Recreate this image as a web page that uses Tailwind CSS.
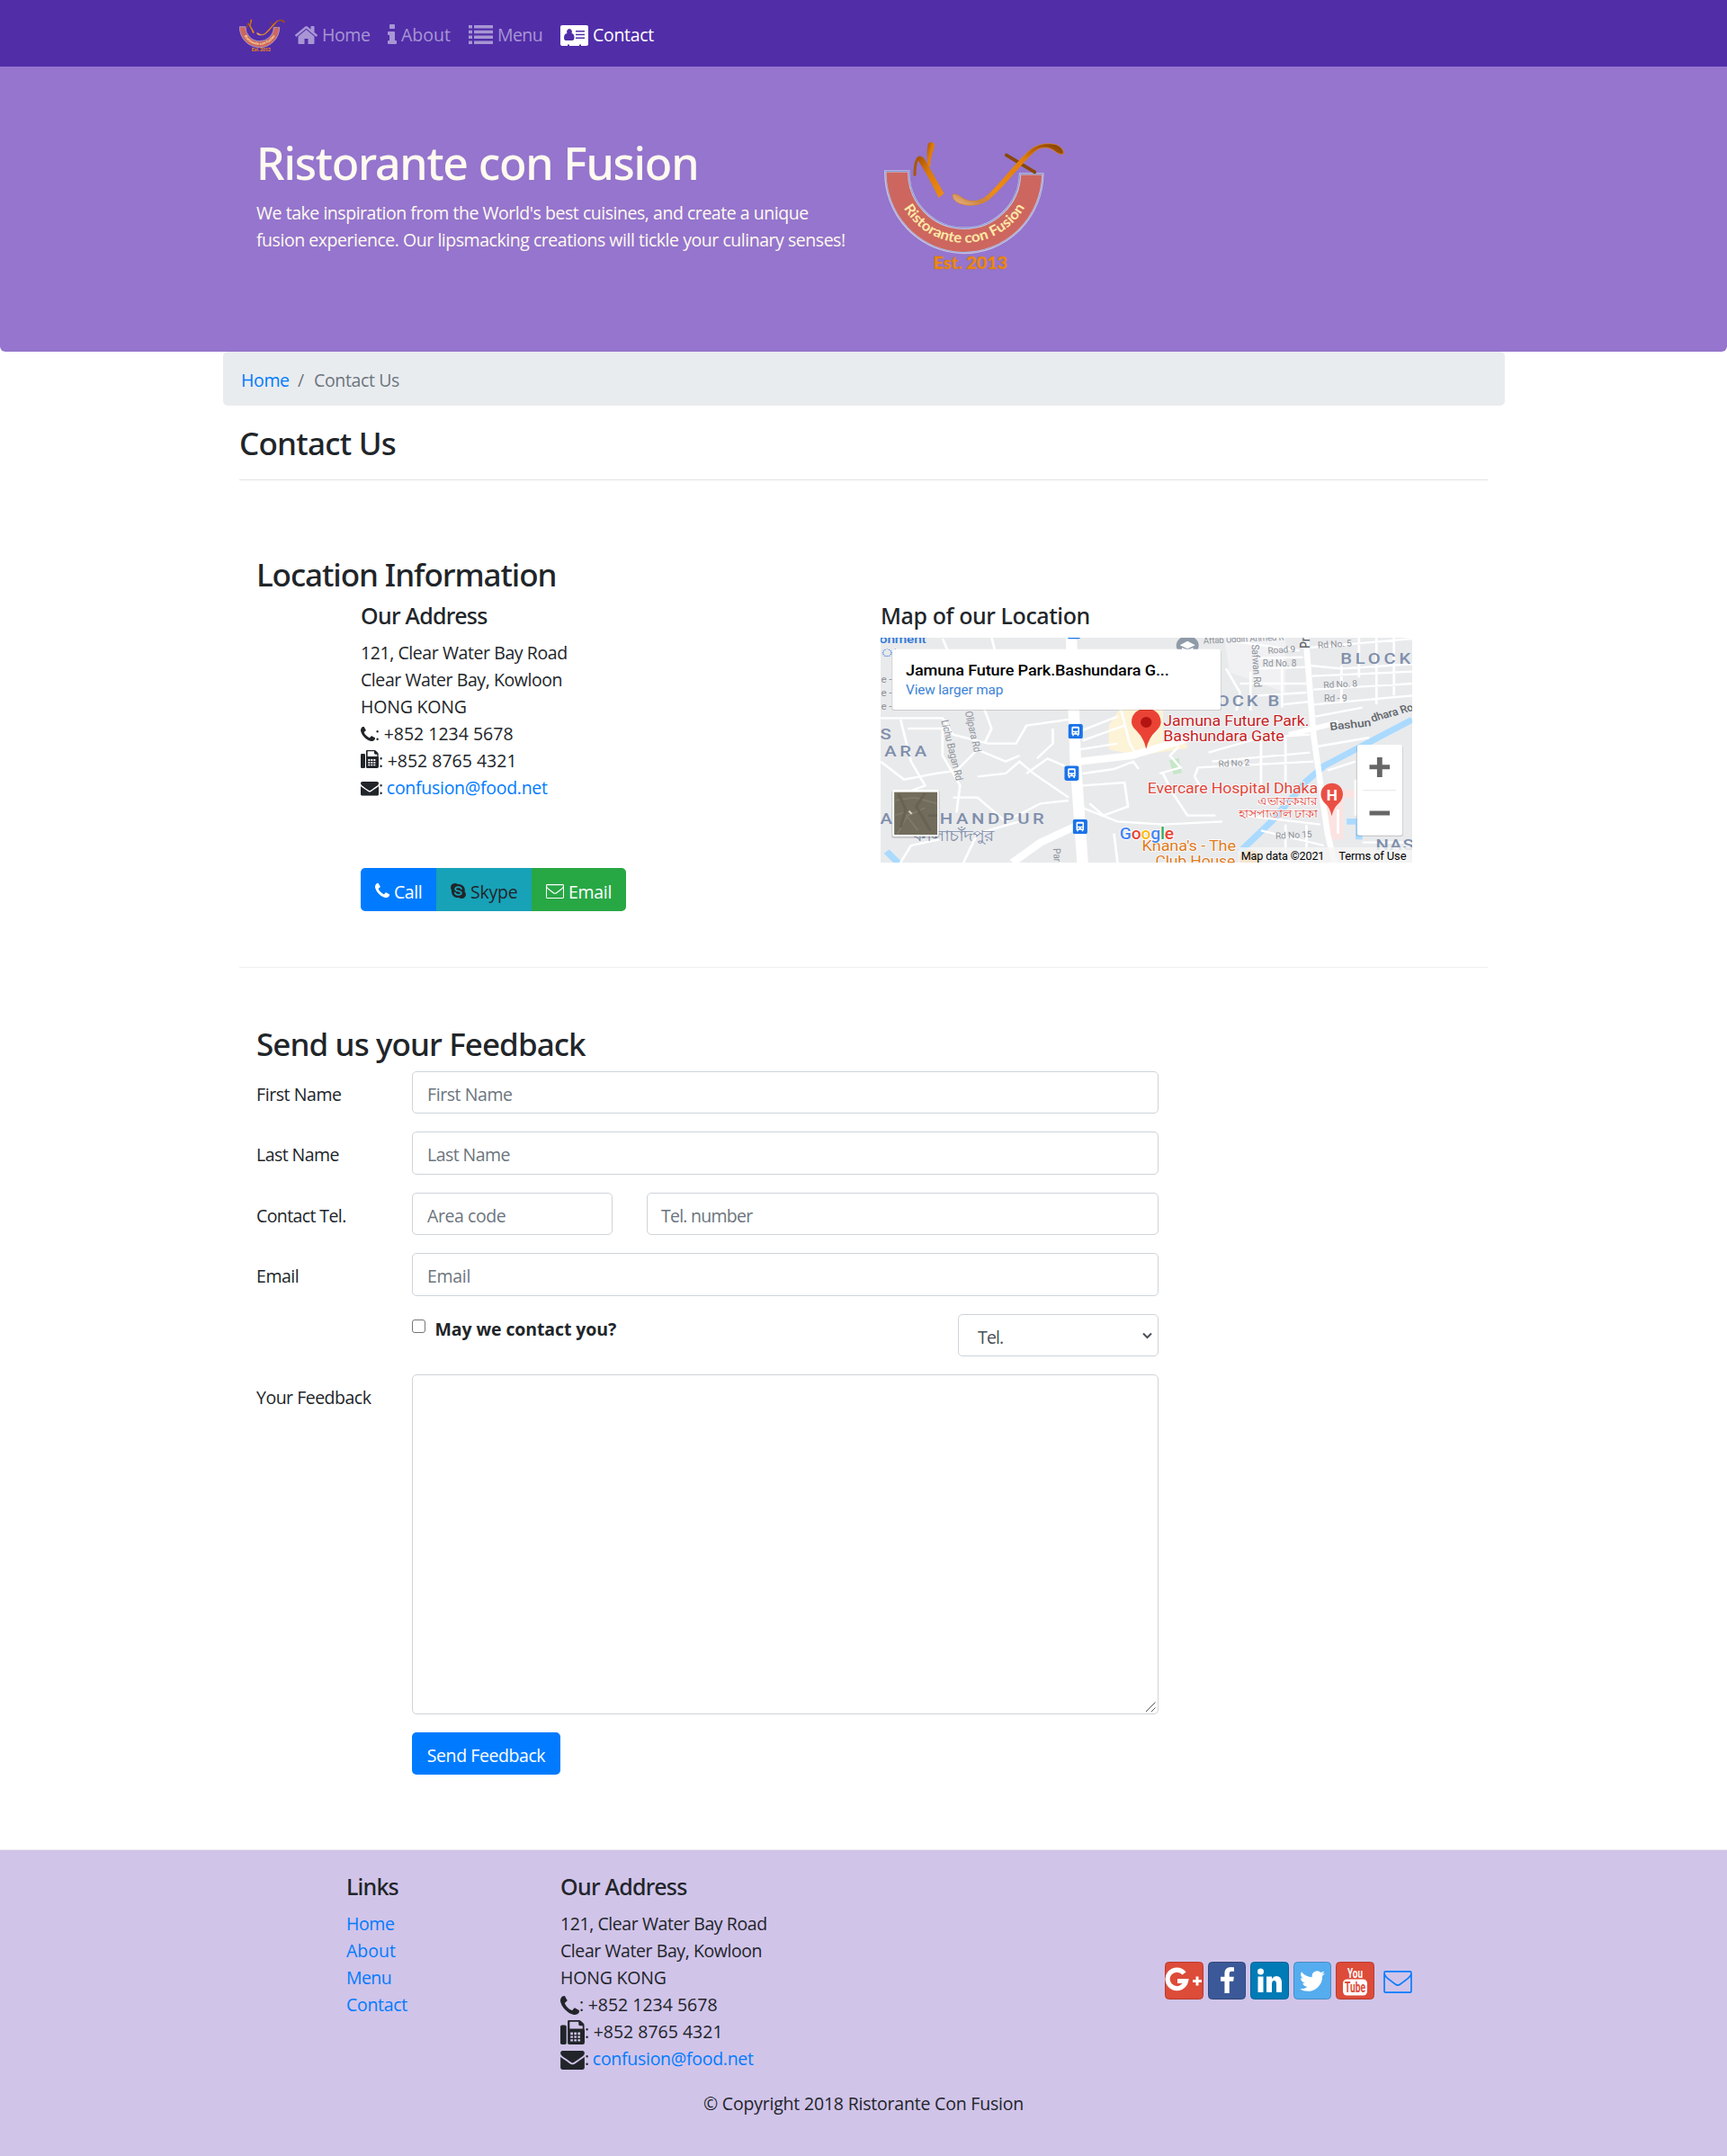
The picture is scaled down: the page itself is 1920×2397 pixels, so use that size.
<!DOCTYPE html>
<html lang="en">
<head>
<meta charset="utf-8">
<title>Ristorante Con Fusion: Contact Us</title>
<script src="https://cdn.jsdelivr.net/npm/@tailwindcss/browser@4"></script>
</head>
<body class="bg-white text-[#212529] font-['Open_Sans',sans-serif] text-[19.5px] leading-[30px] tracking-[-0.42px]">

<!-- shared symbols -->
<svg class="absolute size-0">
  <linearGradient id="gold" x1="0" y1="0" x2="1" y2="1"><stop offset="0" stop-color="#a34f00"/><stop offset=".4" stop-color="#d9780c"/><stop offset="1" stop-color="#f08c14"/></linearGradient>
  <linearGradient id="blade" x1="0" y1="1" x2="1" y2="0"><stop offset="0" stop-color="#ecbd8c"/><stop offset=".15" stop-color="#c98443"/><stop offset=".3" stop-color="#f08c14"/><stop offset=".7" stop-color="#e07d0c"/><stop offset="1" stop-color="#7a3b02"/></linearGradient>
  <symbol id="logo" viewBox="66 48 604 438">
    <path d="M70 151H148A186 186 0 0 0 520 160H596A262 267 0 0 1 70 151Z" fill="#cd665f" stroke="#cfc5e2" stroke-width="7"/>
    <path d="M70 151H148A186 186 0 0 0 520 160H596" fill="none" stroke="#7c9ad6" stroke-width="3"/>
    <path d="M71 152A261 265 0 0 0 596 160" fill="none" stroke="#7c9ad6" stroke-width="2"/>
    <path id="ribbon" d="M100 157A233 233 0 0 0 566 157" fill="none"/>
    <text font-family="Lato, sans-serif" font-weight="700" font-size="47" letter-spacing="0" fill="#ffe9a6"><textPath href="#ribbon" startOffset="122" textLength="490" lengthAdjust="spacingAndGlyphs">Ristorante con Fusion</textPath></text>
    <text x="230" y="477" font-family="Lato, sans-serif" font-weight="900" font-size="56" fill="#ee8a10" stroke="#c9700f" stroke-width="1" textLength="248" lengthAdjust="spacingAndGlyphs">Est. 2013</text>
    <path d="M168 166C168 130 174 105 186 104" fill="none" stroke="#a85808" stroke-width="9"/>
    <path d="M172 116Q186 88 202 112L266 225L248 240Q215 170 180 116Z" fill="url(#gold)"/>
    <path d="M212 134C208 104 208 80 213 58Q224 48 234 60C234 84 222 92 220 134Z" fill="url(#gold)"/>
    <path d="M474 97L569 154" stroke="#8a4708" stroke-width="11" stroke-linecap="round"/>
    <path d="M294 230Q302 224 318 234Q350 262 395 244C440 215 520 100 565 72Q600 52 640 62Q664 72 666 92Q655 98 642 88Q612 62 578 78C540 104 470 200 415 246Q380 270 335 263Q296 256 294 230Z" fill="url(#blade)" stroke="#e8850f" stroke-width="2"/>
  </symbol>
  <symbol id="phone" viewBox="192 128 1408 1408"><path fill="currentColor" d="M1600 1240q0 27-10 70.500t-21 68.500q-21 50-122 106-94 51-186 51-27 0-53-3.500t-57.500-12.500-47-14.500-55.500-20.500-49-18q-98-35-175-83-127-79-264-216t-216-264q-48-77-83-175-3-9-18-49t-20.500-55.500-14.500-47-12.500-57.500-3.500-53q0-92 51-186 56-101 106-122 25-11 68.500-21t70.500-10q14 0 21 3 18 6 53 76 11 19 30 54t35 63.500 31 53.500q3 4 17.500 25t21.500 35.500 7 28.500q0 20-28.500 50t-62 55-62 53-28.500 46q0 9 5 22.500t8.500 20.500 14 24 11.500 19q76 137 174 235t235 174q2 1 19 11.500t24 14 20.500 8.500 22.500 5q18 0 46-28.500t53-62 55-62 50-28.500q14 0 28.500 7t35.500 21.500 25 17.500q25 15 53.500 31t63.500 35 54 30q70 35 76 53 3 7 3 21z"/></symbol>
  <symbol id="fax" viewBox="0 0 60 60"><rect x="0" y="12" width="15" height="48" rx="4" fill="currentColor"/><path fill="currentColor" fill-rule="evenodd" d="M18 3Q18 0 21 0H46Q49 0 51 2L57 8Q59 10 59 13V21Q60 23 60 26V55Q60 60 55 60H22Q18 60 18 56ZM23 4V21H55V14H49Q45 14 45 10V4ZM25 30V36H31V30ZM34 30V36H40V30ZM43 30V36H49V30ZM25 39V44H31V39ZM34 39V44H40V39ZM43 39V44H49V39ZM25 47V52H31V47ZM34 47V52H40V47ZM43 47V52H49V47Z"/></symbol>
  <symbol id="envelope" viewBox="0 256 1792 1408"><path fill="currentColor" d="M1792 710v794q0 66-47 113t-113 47h-1472q-66 0-113-47t-47-113v-794q44 49 101 87 362 246 497 345 57 42 92.500 65.500t94.500 48 110 24.500h2q51 0 110-24.500t94.500-48 92.500-65.500q170-123 498-345 57-39 100-87zm0-294q0 79-49 151t-122 123q-376 261-468 325-10 7-42.500 31t-54 38.500-52 32.500-57.500 27-50 9h-2q-23 0-50-9t-57.500-27-52-32.500-54-38.500-42.500-31q-91-64-262-182.500t-205-142.500q-62-42-117-115.500t-55-136.500q0-78 41.500-130t118.500-52h1472q65 0 112.500 47t47.500 113z"/></symbol>
  <symbol id="envelope-o" viewBox="0 0 96 76"><path d="M2.500 7Q2.500 2.500 7 2.500H89Q93.500 2.500 93.500 7V69Q93.500 73.500 89 73.500H7Q2.500 73.500 2.500 69ZM3 12Q6 20 14 26L37 44Q48 54 59 44L82 26Q90 20 93 12" fill="none" stroke="currentColor" stroke-width="5"/></symbol>
  <symbol id="bus" viewBox="0 0 42 50" preserveAspectRatio="none"><rect width="42" height="50" rx="8" fill="#1a73e8"/><path d="M10 13Q10 9 14 9H28Q32 9 32 13V36H30V41H26V36H16V41H12V36H10Z" fill="#fff"/><path d="M14 15H28V24H14ZM14 28H18V32H14ZM24 28H28V32H24Z" fill="#1a73e8"/></symbol>
</svg>

<nav class="h-[74px] bg-[#512da8] text-white/50">
  <div class="w-[1388px] mx-auto h-full flex items-center pt-[4px]">
    <svg class="w-[51px] h-[37px] mr-[11px]"><use href="#logo"/></svg>
    <a class="flex items-center w-[103px] whitespace-nowrap"><svg class="w-[25px] h-5 mr-[5px] shrink-0" viewBox="96 253 1600 1283" preserveAspectRatio="none"><path fill="currentColor" d="M1472 992v480q0 26-19 45t-45 19h-384v-384h-256v384h-384q-26 0-45-19t-19-45v-480q0-1 .5-3t.5-3l575-474 575 474q1 2 1 6zm223-69l-62 74q-8 9-21 11h-3q-13 0-21-7l-692-577-692 577q-12 8-24 7-13-2-21-11l-62-74q-8-10-7-23.500t11-21.500l719-599q32-26 76-26t76 26l244 204v-195q0-14 9-23t23-9h192q14 0 23 9t9 23v408l219 182q10 8 11 21.500t-7 23.500z"/></svg>Home</a>
    <a class="flex items-center w-[90px] tracking-normal"><svg class="w-[10px] h-[22px] mr-[5px] -mt-0.5" viewBox="576 128 640 1408"><path fill="currentColor" d="M1216 1344v128q0 26-19 45t-45 19h-512q-26 0-45-19t-19-45v-128q0-26 19-45t45-19h64v-384h-64q-26 0-45-19t-19-45v-128q0-26 19-45t45-19h384q26 0 45 19t19 45v576h64q26 0 45 19t19 45zm-128-1152v192q0 26-19 45t-45 19h-256q-26 0-45-19t-19-45v-192q0-26 19-45t45-19h256q26 0 45 19t19 45z"/></svg>About</a>
    <a class="flex items-center w-[102px] tracking-[-0.6px]"><svg class="w-[27px] h-[21px] mr-[5px] -mt-0.5" viewBox="0 0 27 21" fill="currentColor"><path d="M0 0H4V3.500H0ZM6 0H27V3.500H6ZM0 5.800H4V9.200H0ZM6 5.800H27V9.200H6ZM0 11.600H4V15H0ZM6 11.600H27V15H6ZM0 17.500H4V21H0ZM6 17.500H27V21H6Z"/></svg>Menu</a>
    <a class="flex items-center text-white tracking-[-0.3px]"><svg class="w-[31px] h-[23px] mr-[5px]" viewBox="0 0 31 23"><path fill="currentColor" fill-rule="evenodd" d="M0 2Q0 0 2 0H29Q31 0 31 2V21Q31 23 29 23H23V21.500H21V23H10V21.500H8V23H2Q0 23 0 21ZM10 4A3 3.300 0 0 0 7.500 9Q4 9.500 4 14Q4 17 6 17H13Q15.500 17 15.500 14Q15.500 9.500 12.500 9A3 3.300 0 0 0 10 4ZM17 6V7.500H27V6ZM17 9.800V11.300H27V9.800ZM17 13.600V15.100H27V13.600Z"/></svg>Contact</a>
  </div>
</nav>

<header class="h-[317px] bg-[#9575cd] rounded-b-md text-[#fffaf0]">
  <div class="w-[1350px] mx-auto flex pt-[77px]">
    <div class="w-[697px]">
      <h1 class="font-['Noto_Sans',sans-serif] text-[50px] leading-[60px] font-medium tracking-[-1.22px] mb-[11px]">Ristorante con Fusion</h1>
      <p class="whitespace-nowrap tracking-[-0.46px]">We take inspiration from the World's best cuisines, and create a unique<br>fusion experience. Our lipsmacking creations will tickle your culinary senses!</p>
    </div>
    <svg class="w-[201px] h-[146px] mt-[5px] ml-px"><use href="#logo"/></svg>
  </div>
</header>

<main class="w-[1425px] mx-auto">
  <ol class="flex h-[60px] bg-[#e9ecef] rounded-[5px] pt-[17px] pl-[20.500px] text-[#6c757d] tracking-[-0.36px]">
    <li class="w-[63px] text-[#007bff]">Home</li><li class="w-[18px]">/</li><li>Contact Us</li>
  </ol>

  <section class="mx-[18.500px] pt-[21px] h-[83px] border-b border-[#e3e3e3]">
    <h3 class="font-['Noto_Sans',sans-serif] text-[35px] leading-[42px] font-medium tracking-[-0.75px]">Contact Us</h3>
  </section>

  <section class="mx-[18.500px] pl-[19px] pt-[84px] h-[542px] border-b border-[#efefef]">
    <h3 class="font-['Noto_Sans',sans-serif] text-[35px] leading-[42px] font-medium tracking-[-1.08px]">Location Information</h3>
    <div class="flex pl-[116px]">
      <div class="w-[578px] pt-[9px]">
        <h5 class="font-['Noto_Sans',sans-serif] text-[25px] leading-[30px] font-medium tracking-[-0.7px] mb-[12px]">Our Address</h5>
        <address class="not-italic">
          121, Clear Water Bay Road<br>Clear Water Bay, Kowloon<br><span class="tracking-[-0.2px]">HONG KONG</span><br>
          <span class="flex items-center h-[30px] tracking-normal"><svg class="size-4"><use href="#phone"/></svg>:<span class="ml-[4.500px]">+852 1234 5678</span></span>
          <span class="flex items-center h-[30px] tracking-normal"><svg class="size-5 -mt-1"><use href="#fax"/></svg>:<span class="ml-[4.500px]">+852 8765 4321</span></span>
          <span class="flex items-center h-[30px] tracking-[-0.28px]"><svg class="w-5 h-[15.700px] mt-0.5"><use href="#envelope"/></svg>:<a class="ml-[4px] text-[#007bff]">confusion@food.net</a></span>
        </address>
        <div class="flex mt-[74px] h-[48px] w-[295px] rounded-[5px] overflow-hidden text-white">
          <a class="flex items-center w-[84px] pl-4 pt-1.5 bg-[#007bff]"><svg class="size-4 mr-[5px] -mt-1"><use href="#phone"/></svg>Call</a>
          <a class="flex items-center w-[106px] pl-4 pt-1.5 bg-[#17a2b8] text-[#212529] tracking-[-0.2px]"><svg class="size-[17px] mr-[5px] -mt-1" viewBox="0 0 50 50"><path fill="currentColor" d="M14 0Q20 0 23 3Q36 1 43 11Q48 18 46 27Q50 31 50 37Q48 50 36 50Q31 50 27 47Q14 49 6 38Q2 31 3 23Q0 19 0 14Q1 1 14 0Z"/><path d="M35 18Q33 12 25 12Q15 13 15 19Q16 24 25 25Q35 27 35 32Q34 38 25 38Q16 38 14 31" fill="none" stroke="#17a2b8" stroke-width="5" stroke-linecap="round"/></svg>Skype</a>
          <a class="flex items-center w-[105px] pl-4 pt-1.5 bg-[#28a745] tracking-[-0.3px]"><svg class="w-5 h-4 mr-[5px] -mt-0.5"><use href="#envelope-o"/></svg>Email</a>
        </div>
      </div>
      <div class="pt-[9px]">
        <h5 class="font-['Noto_Sans',sans-serif] text-[25px] leading-[30px] font-medium tracking-[-0.4px] mb-[10px]">Map of our Location</h5>
        <svg class="w-[591px] h-[250px] block" viewBox="23 147 1519 750" preserveAspectRatio="none" font-family="Roboto, sans-serif">
          <rect x="23" y="147" width="1519" height="750" fill="#e9eaec"/>
          <path d="M1005 147H1180V330L1020 262Z" fill="#f1f1f4"/>
          <path d="M675 440L705 387H830V500L895 490L900 515L760 540L675 520Z" fill="#fdf3d6"/>
          <path d="M848 555L875 548L884 598L860 603Z" fill="#c5e8c8"/>
          <path d="M1290 655H1380V680H1345V820H1310Z" fill="#fbe3e1"/>
          <path d="M1542 420L1290 575L1240 625L1140 760L1050 860M40 860L75 900M1355 760H1390V820" fill="none" stroke="#aadaff" stroke-width="20"/>
          <path fill="none" stroke="#fff" stroke-width="7" d="M23 415H200L230 470 330 500H410L440 440 560 420M23 560L90 620 180 600 240 590 300 520 380 560 420 540M80 420L110 560 150 640 60 680M200 150L215 190M340 147L350 190M320 387L340 450 320 500M100 450H200V540L250 640 240 730M300 610L380 600 420 560 460 600 560 680M230 680H300L380 760 480 700 560 690M590 460L700 410M600 490L720 440M590 520L700 500M470 550L515 500V450M440 600L500 550 560 580M600 600L690 585 745 560 760 585M600 640L720 630 730 710 660 740 620 700M820 600L880 580 850 540 875 510M710 387L735 500 750 530M830 600L860 670 900 740 980 740M590 710L700 760 830 770 1000 760M700 897L690 800M260 897L300 800 420 760M80 897L110 840 190 820M920 610L930 580 1260 560M960 530L1110 480 1250 470M1110 480V640M1180 475V640M970 560L1250 530M920 610L940 650M1040 160L1220 190M1100 215L1230 212M1100 250L1240 245M1010 250L1050 330 1040 390M1080 260V390M1170 215V380M1050 300H1240M1100 340L1240 330M1170 370L1250 360M1250 180L1542 150M1250 240L1340 250 1542 235M1255 275L1542 260M1260 320L1542 300M1260 370L1542 340M1265 410L1400 380M1340 240V360M1390 147V280M1440 147V370M1490 147V340M1270 450L1310 440M1270 510L1420 480M1300 590L1380 560M1100 700H1270M1060 740L1280 770M1180 770V897M1240 770V897M1110 790L1290 840M1330 720V800M1380 620V740M1400 830H1542"/>
          <path fill="none" stroke="#fff" d="M568 147L580 560 600 897" stroke-width="32"/>
          <path fill="none" stroke="#fff" d="M590 560L740 540 870 495 930 470M400 897L480 830 590 770" stroke-width="24"/>
          <path fill="none" stroke="#fff" d="M1238 147L1260 470 1300 800 1320 897M1190 470L1330 430" stroke-width="17"/>
          <g fill="#8e9399" font-size="30">
            <text x="946" y="167" textLength="230" lengthAdjust="spacingAndGlyphs" transform="rotate(-3 946 167)">Aftab Uddin Ahmed R</text>
            <text x="1130" y="200" textLength="79" lengthAdjust="spacingAndGlyphs" transform="rotate(-4 1130 200)">Road 9</text>
            <text x="1115" y="243" textLength="96" lengthAdjust="spacingAndGlyphs">Rd No. 8</text>
            <text x="1273" y="182" textLength="97" lengthAdjust="spacingAndGlyphs" transform="rotate(-4 1273 182)">Rd No. 5</text>
            <text x="1289" y="315" textLength="97" lengthAdjust="spacingAndGlyphs" transform="rotate(-3 1289 315)">Rd No. 8</text>
            <text x="1290" y="361" textLength="66" lengthAdjust="spacingAndGlyphs">Rd - 9</text>
            <text x="989" y="578" textLength="89" lengthAdjust="spacingAndGlyphs" transform="rotate(-3 989 578)">Rd No 2</text>
            <text x="1152" y="818" textLength="104" lengthAdjust="spacingAndGlyphs" transform="rotate(-3 1152 818)">Rd No 15</text>
            <text transform="translate(1083 170) rotate(87)" textLength="143" lengthAdjust="spacingAndGlyphs">Safwan Rd</text>
            <text transform="translate(196 424) rotate(78)" textLength="205" lengthAdjust="spacingAndGlyphs">Lichu Bagan Rd</text>
            <text transform="translate(264 394) rotate(79)" textLength="138" lengthAdjust="spacingAndGlyphs">Olipara Rd</text>
            <text transform="translate(516 850) rotate(87)">Par</text>
            <text x="24" y="296">e -</text><text x="24" y="342">e -</text><text x="24" y="388">e -</text>
          </g>
          <g fill="#60666c" font-size="36" font-weight="500">
            <text x="1308" y="456" textLength="118" lengthAdjust="spacingAndGlyphs" transform="rotate(-7 1308 456)">Bashun</text>
            <text x="1428" y="428" textLength="126" lengthAdjust="spacingAndGlyphs" transform="rotate(-18 1428 428)">dhara Ro</text>
            <text transform="translate(1249 182) rotate(-90)">Pr</text>
          </g>
          <g fill="#7f8fab" font-size="52" font-weight="500">
            <text x="1337" y="234" textLength="200" lengthAdjust="spacing">BLOCK</text>
            <text x="950" y="375" textLength="212">LOCK B</text>
            <text x="22" y="486">S</text>
            <text x="34" y="542" textLength="120">ARA</text>
            <text x="22" y="769">A</text>
            <text x="192" y="769" textLength="298">HANDPUR</text>
            <text x="1438" y="855" textLength="108">NAS</text>
            <text x="116" y="825" textLength="232" lengthAdjust="spacingAndGlyphs" font-weight="400" font-size="50">কালাচাঁদপুর</text>
          </g>
          <g fill="#2f77d8" font-size="38" font-weight="500"><text x="20" y="166" textLength="133" lengthAdjust="spacingAndGlyphs">onment</text><text x="22" y="210">াস</text></g>
          <path d="M557 147H594Q592 151 586 151H565Q558 151 557 147Z" fill="#1a73e8"/>
          <circle cx="900" cy="173" r="32" fill="#8f9aa8"/><path d="M878 172L900 158L922 172L900 184ZM884 180V186L900 194L916 186V180L900 188Z" fill="#fff"/>
          <use href="#bus" x="559" y="434" width="42" height="50"/><use href="#bus" x="548" y="574" width="42" height="50"/><use href="#bus" x="572" y="752" width="42" height="50"/>
          <g paint-order="stroke" stroke="#fff" stroke-width="4" fill="#c5221f" font-size="50">
            <text x="831" y="441" textLength="416" lengthAdjust="spacingAndGlyphs">Jamuna Future Park.</text>
            <text x="831" y="492" textLength="345" lengthAdjust="spacingAndGlyphs">Bashundara Gate</text>
            <g fill="#e0453a"><text x="786" y="666" textLength="486" lengthAdjust="spacingAndGlyphs">Evercare Hospital Dhaka</text>
            <text x="1100" y="706" font-size="38" textLength="170" lengthAdjust="spacingAndGlyphs">এভারকেয়ার</text>
            <text x="1045" y="748" font-size="38" textLength="227" lengthAdjust="spacingAndGlyphs">হাসপাতাল ঢাকা</text></g>
            <g fill="#dd7b1c" font-size="48"><text x="770" y="859" textLength="268" lengthAdjust="spacingAndGlyphs">Khana's - The</text><text x="808" y="908" textLength="228" lengthAdjust="spacingAndGlyphs">Club House</text></g>
          </g>
          <circle cx="1080" cy="886" r="31" fill="#f0a53a"/>
          <path d="M782 518Q775 480 755 458Q740 442 740 428C741 368 823 368 824 428Q824 442 810 458Q789 480 782 518Z" fill="#ea4335"/><ellipse cx="782" cy="429" rx="16" ry="18" fill="#b31412"/>
          <path d="M1312 742Q1308 714 1292 698Q1281 685 1281 668C1283 620 1343 620 1344 668Q1344 685 1333 698Q1317 714 1312 742Z" fill="#ea4f44"/><text x="1297" y="689" font-size="48" font-weight="700" fill="#fff" textLength="31" lengthAdjust="spacingAndGlyphs">H</text>
          <text x="706" y="819" font-size="57" font-weight="500" textLength="155" lengthAdjust="spacingAndGlyphs" paint-order="stroke" stroke="#fff" stroke-width="5"><tspan fill="#4285f4">G</tspan><tspan fill="#ea4335">o</tspan><tspan fill="#fbbc05">o</tspan><tspan fill="#4285f4">g</tspan><tspan fill="#34a853">l</tspan><tspan fill="#ea4335">e</tspan></text>
          <rect x="55" y="188" width="942" height="202" rx="6" fill="#0002"/><rect x="57" y="185" width="938" height="202" rx="6" fill="#fff"/>
          <text x="95" y="272" font-size="52" font-weight="500" fill="#000" textLength="752" lengthAdjust="spacingAndGlyphs">Jamuna Future Park.Bashundara G...</text>
          <text x="95" y="336" font-size="46" fill="#3c83d8" textLength="278" lengthAdjust="spacingAndGlyphs">View larger map</text>
          <rect x="54" y="656" width="138" height="160" rx="6" fill="#0002"/><rect x="57" y="654" width="132" height="155" rx="5" fill="#fff"/><rect x="62" y="662" width="123" height="142" fill="#716c5c"/>
          <path d="M62 690L120 680 185 700M70 804L100 740 150 715M62 740L90 730 130 790" stroke="#7f7a69" stroke-width="5" fill="none"/><path d="M75 670L95 720 80 780M150 665L125 710 165 790M160 740H185" stroke="#676355" stroke-width="8" fill="none"/><path d="M104 725L112 735" stroke="#d5d0c2" stroke-width="6"/>
          <rect x="1382" y="506" width="134" height="304" rx="6" fill="#0002"/><rect x="1385" y="504" width="129" height="302" rx="6" fill="#fff"/>
          <path d="M1420 578H1478M1449 546V612M1420 732H1478" stroke="#666" stroke-width="15"/><path d="M1401 656H1496" stroke="#e6e6e6" stroke-width="3"/>
          <rect x="1045" y="846" width="497" height="51" fill="#f5f5f5cc"/>
          <text x="1053" y="888" font-size="39" fill="#000" textLength="238" lengthAdjust="spacingAndGlyphs">Map data ©2021</text><text x="1332" y="888" font-size="39" fill="#000" textLength="193" lengthAdjust="spacingAndGlyphs">Terms of Use</text>
        </svg>
      </div>
    </div>
  </section>

  <section class="pl-[37.500px] pt-[64px] h-[980px]">
    <h3 class="font-['Noto_Sans',sans-serif] text-[35px] leading-[42px] font-medium tracking-[-0.9px] mb-[9px]">Send us your Feedback</h3>
    <form class="grid grid-cols-[173px_830px] gap-y-5 text-[#212529]">
      <label class="pt-[11px]">First Name</label>
      <div class="h-[47.400px] border border-[#ced4da] rounded-[5px] pt-[10px] pl-[16px] text-[#6c757d]">First Name</div>
      <label class="pt-[11px] tracking-[-0.55px]">Last Name</label>
      <div class="h-[47.400px] border border-[#ced4da] rounded-[5px] pt-[10px] pl-[16px] text-[#6c757d] tracking-[-0.55px]">Last Name</div>
      <label class="pt-[11px] tracking-[-0.6px]">Contact Tel.</label>
      <div class="flex gap-[38px] text-[#6c757d]">
        <div class="w-[223px] h-[47.400px] border border-[#ced4da] rounded-[5px] pt-[10px] pl-[16px]">Area code</div>
        <div class="w-[569px] h-[47.400px] border border-[#ced4da] rounded-[5px] pt-[10px] pl-[15px] tracking-[-0.75px]">Tel. number</div>
      </div>
      <label class="pt-[11px] tracking-[-0.45px]">Email</label>
      <div class="h-[47.400px] border border-[#ced4da] rounded-[5px] pt-[10px] pl-[16px] text-[#6c757d] tracking-[-0.3px]">Email</div>
      <div></div>
      <div class="flex">
        <span class="size-[15px] mt-[6px] border border-[#767676] rounded-[3px] bg-white"></span>
        <strong class="ml-[10.500px] pt-[2px] w-[581px] tracking-[-0.1px]">May we contact you?</strong>
        <div class="w-[223px] ml-px h-[47.400px] border border-[#ced4da] rounded-[5px] pt-[10px] pl-[21px] pr-[6px] text-[#495057] flex justify-between tracking-[-0.9px]">Tel.<svg class="w-[11px] h-2 mt-[9px]" viewBox="0 0 11 8"><path d="M1 1.500L5.500 6L10 1.500" fill="none" stroke="#495057" stroke-width="2"/></svg></div>
      </div>
      <label class="pt-[11px] tracking-[-0.5px]">Your Feedback</label>
      <div class="h-[378px] border border-[#ced4da] rounded-[5px] flex items-end justify-end p-[2px]"><svg class="size-[11px]" viewBox="0 0 11 11"><path d="M0 11L10.500 .5M6 11L10.500 6.500" stroke="#555" stroke-width="1"/></svg></div>
      <div></div>
      <a class="w-[165px] h-[47px] rounded-[5px] bg-[#007bff] text-white pt-[11px] text-center">Send Feedback</a>
    </form>
  </section>
</main>

<footer class="h-[341px] bg-[#d1c4e9] border-t border-[#ececec]">
  <div class="w-[1150px] mx-auto flex pt-[25px]">
    <div class="w-[238px] shrink-0">
      <h5 class="font-['Noto_Sans',sans-serif] text-[25px] leading-[30px] font-medium tracking-[-0.8px] mb-[12px]">Links</h5>
      <ul class="text-[#007bff]"><li>Home</li><li class="tracking-normal">About</li><li class="tracking-[-0.6px]">Menu</li><li class="tracking-[-0.3px]">Contact</li></ul>
    </div>
    <div class="w-[672px] shrink-0">
      <h5 class="font-['Noto_Sans',sans-serif] text-[25px] leading-[30px] font-medium tracking-[-0.7px] mb-[12px]">Our Address</h5>
      <address class="not-italic">
        121, Clear Water Bay Road<br>Clear Water Bay, Kowloon<br><span class="tracking-[-0.2px]">HONG KONG</span><br>
        <span class="flex items-center h-[30px] tracking-normal"><svg class="size-[21px]"><use href="#phone"/></svg>:<span class="ml-[4.500px]">+852 1234 5678</span></span>
        <span class="flex items-center h-[30px] tracking-normal"><svg class="size-[27px]"><use href="#fax"/></svg>:<span class="ml-[4.500px]">+852 8765 4321</span></span>
        <span class="flex items-center h-[30px] tracking-[-0.28px]"><svg class="w-[27px] h-[21px] mt-0.5"><use href="#envelope"/></svg>:<a class="ml-[4px] text-[#007bff]">confusion@food.net</a></span>
      </address>
    </div>
    <div class="flex gap-[5px] pt-[99px] shrink-0">
      <svg class="w-[43px] h-[42px]" viewBox="0 0 43 42"><rect x=".5" y=".5" width="42" height="41" rx="4" fill="#dd4b39" stroke="#b93b2c"/><path d="M21.500 13A10.300 10.300 0 1 0 23.500 21.500H14" fill="none" stroke="#fff" stroke-width="5.200"/><path d="M31 21.500H41M36 16.500V26.500" stroke="#fff" stroke-width="3"/></svg>
      <svg class="w-[42px] h-[42px]" viewBox="0 0 42 42"><rect x=".5" y=".5" width="41" height="41" rx="4" fill="#3b5998" stroke="#30487c"/><svg x="13.500" y="6" width="16" height="29" viewBox="479 -1 864 1664"><path fill="#fff" d="M1343 12v264h-157q-86 0-116 36t-30 108v189h293l-39 296h-254v759h-306v-759h-255v-296h255v-218q0-186 104-288.500t277-102.500q147 0 228 12z"/></svg></svg>
      <svg class="w-[43px] h-[42px]" viewBox="0 0 43 42"><rect x=".5" y=".5" width="42" height="41" rx="4" fill="#007bb6" stroke="#00649a"/><circle cx="11.500" cy="11" r="3.500" fill="#fff"/><path fill="#fff" d="M8.500 16.500H14.500V34H8.500ZM18 16.500H24V19Q26 16 29 16Q35 16 35 24V34H29V25Q29 21 26.500 21Q24 21 24 25V34H18Z"/></svg>
      <svg class="w-[42px] h-[42px]" viewBox="0 0 42 42"><rect x=".5" y=".5" width="41" height="41" rx="4" fill="#55acee" stroke="#458dc5"/><svg x="7" y="10" width="28" height="23" viewBox="108 256 1576 1280"><path fill="#fff" d="M1684 408q-67 98-162 167 1 14 1 42 0 130-38 259.500t-115.500 248.500-184.500 210.500-258 146-323 54.500q-271 0-496-145 35 4 78 4 225 0 401-138-105-2-188-64.500t-114-159.500q33 5 61 5 43 0 85-11-112-23-185.500-111.500t-73.500-205.500v-4q68 38 146 41-66-44-105-115t-39-154q0-88 44-163 121 149 294.500 238.500t371.500 99.500q-8-38-8-74 0-134 94.500-228.500t228.500-94.500q140 0 236 102 109-21 205-78-37 115-142 178 93-10 186-50z"/></svg></svg>
      <svg class="w-[43px] h-[42px]" viewBox="0 0 43 42" font-family="Roboto, sans-serif" font-weight="700" letter-spacing="0"><rect x=".5" y=".5" width="42" height="41" rx="4" fill="#dd4b39" stroke="#b93b2c"/><text x="13" y="17.500" font-size="15.500" fill="#fff" textLength="17" lengthAdjust="spacingAndGlyphs">You</text><rect x="8" y="19.500" width="27" height="18" rx="4.500" fill="#fff"/><text x="10" y="34" font-size="16" fill="#dd4b39" textLength="23" lengthAdjust="spacingAndGlyphs">Tube</text></svg>
      <svg class="w-8 h-[25px] ml-[5px] mt-[10px] text-[#007bff]"><use href="#envelope-o"/></svg>
    </div>
  </div>
  <p class="text-center mt-[20px] tracking-[-0.2px]">© Copyright 2018 Ristorante Con Fusion</p>
</footer>
</body>
</html>
